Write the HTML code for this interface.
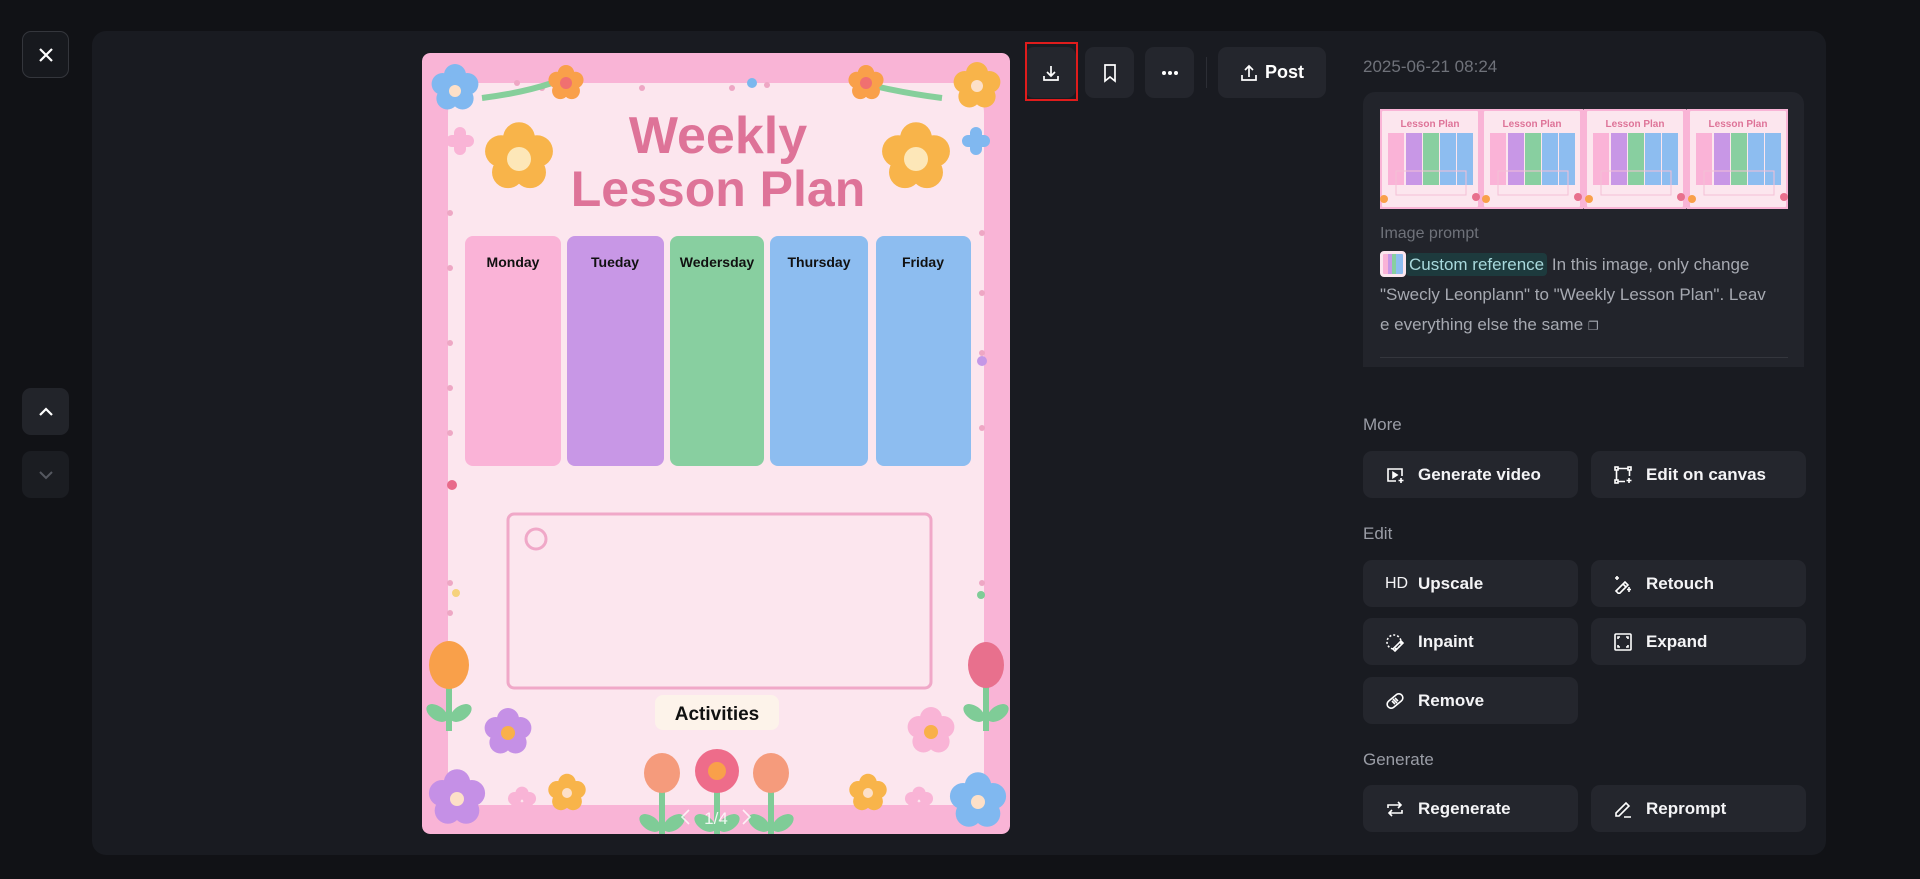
<!DOCTYPE html>
<html><head><meta charset="utf-8"><style>
*{box-sizing:border-box;margin:0;padding:0}
body{width:1920px;height:879px;background:#111216;font-family:"Liberation Sans",sans-serif;position:relative;overflow:hidden;color:#fff}
.abs{position:absolute}
.sq{position:absolute;width:47px;height:47px;border-radius:9px;background:#1b1d23;display:flex;align-items:center;justify-content:center}
.panel{left:92px;top:31px;width:1734px;height:824px;background:#191b21;border-radius:14px}
.tb{position:absolute;top:47px;height:51px;border-radius:9px;background:#24262d;display:flex;align-items:center;justify-content:center}
.lbl{position:absolute;left:1363px;font-size:17px;color:#9a9da6}
.btn{position:absolute;width:215px;height:47px;border-radius:9px;background:#24262d;display:flex;align-items:center;font-size:17px;font-weight:bold;color:#f4f4f6}
.btn svg{position:absolute;left:22px;top:14px}
.btn span{position:absolute;left:55px}
</style></head><body>
<div class="sq" style="left:22px;top:31px;border:1px solid #34363c;background:#17191e"><svg width="18" height="18" viewBox="0 0 18 18"><path d="M3 3L15 15M15 3L3 15" stroke="#fff" stroke-width="2.2"/></svg></div>
<div class="sq" style="left:22px;top:388px;background:#22242a"><svg width="18" height="18"><path d="M3 12L9 6L15 12" stroke="#fff" stroke-width="2.2" fill="none"/></svg></div>
<div class="sq" style="left:22px;top:451px;background:#1b1d22"><svg width="18" height="18"><path d="M3 6L9 12L15 6" stroke="#555860" stroke-width="2" fill="none"/></svg></div>
<div class="abs panel"></div>

<svg class="abs" style="left:422px;top:53px;border-radius:8px" width="588" height="781" viewBox="0 0 588 781">
<defs>
<g id="fl"><circle cx="0" cy="-13" r="11"/><circle cx="12.4" cy="-4" r="11"/><circle cx="7.6" cy="10.5" r="11"/><circle cx="-7.6" cy="10.5" r="11"/><circle cx="-12.4" cy="-4" r="11"/></g>
<g id="tu"><path d="M0 20V70" stroke="#7fcc97" stroke-width="6"/><ellipse cx="-12" cy="52" rx="12" ry="7" fill="#7fcc97" transform="rotate(35 -12 52)"/><ellipse cx="12" cy="52" rx="12" ry="7" fill="#7fcc97" transform="rotate(-35 12 52)"/></g>
</defs>
<rect width="588" height="781" rx="8" fill="#f9b4d6"/>
<rect x="26" y="30" width="536" height="722" rx="30" fill="#fce6ee"/>
<g fill="#eea7c4"><circle cx="95" cy="30" r="3"/><circle cx="120" cy="35" r="3"/><circle cx="150" cy="38" r="3"/><circle cx="220" cy="35" r="3"/><circle cx="310" cy="35" r="3"/><circle cx="345" cy="32" r="3"/>
<circle cx="28" cy="160" r="3"/><circle cx="28" cy="215" r="3"/><circle cx="28" cy="290" r="3"/><circle cx="28" cy="335" r="3"/><circle cx="28" cy="380" r="3"/><circle cx="28" cy="530" r="3"/><circle cx="28" cy="560" r="3"/>
<circle cx="560" cy="180" r="3"/><circle cx="560" cy="240" r="3"/><circle cx="560" cy="300" r="3"/><circle cx="560" cy="375" r="3"/><circle cx="560" cy="530" r="3"/></g>
<circle cx="330" cy="30" r="5" fill="#7ab8ee"/><circle cx="560" cy="308" r="5" fill="#c497e6"/><circle cx="30" cy="432" r="5" fill="#e86a8a"/><circle cx="34" cy="540" r="4" fill="#f6d27d"/><circle cx="559" cy="542" r="4" fill="#7fcc97"/>
<path d="M60 45Q100 40 130 30M440 30Q480 40 520 45" stroke="#86cf9b" stroke-width="6" fill="none"/>
<use href="#fl" x="33" y="35" fill="#80b8f0"/><circle cx="33" cy="38" r="6" fill="#fde0c8"/>
<use href="#fl" x="144" y="30" fill="#f9a04a" transform="translate(144 30) scale(.75) translate(-144 -30)"/><circle cx="144" cy="30" r="6" fill="#f07070"/>
<use href="#fl" x="444" y="30" fill="#f9a04a" transform="translate(444 30) scale(.75) translate(-444 -30)"/><circle cx="444" cy="30" r="6" fill="#f07070"/>
<use href="#fl" x="555" y="33" fill="#f8b44a"/><circle cx="555" cy="33" r="6" fill="#fde0c8"/>
<use href="#fl" x="97" y="104" fill="#f8b44a" transform="translate(97 104) scale(1.45) translate(-97 -104)"/><circle cx="97" cy="106" r="12" fill="#fde7b8"/>
<use href="#fl" x="494" y="104" fill="#f8b44a" transform="translate(494 104) scale(1.45) translate(-494 -104)"/><circle cx="494" cy="106" r="12" fill="#fde7b8"/>
<path d="M30 88h16M38 80v16" stroke="#f9b4d6" stroke-width="12" stroke-linecap="round"/>
<path d="M546 88h16M554 80v16" stroke="#80b8f0" stroke-width="12" stroke-linecap="round"/>
<text x="296" y="100" text-anchor="middle" font-family="Liberation Sans" font-weight="bold" font-size="52" fill="#de7398">Weekly</text>
<text x="296" y="153" text-anchor="middle" font-family="Liberation Sans" font-weight="bold" font-size="50" fill="#de7398">Lesson Plan</text>
<rect x="43" y="183" width="96" height="230" rx="8" fill="#fab3d7"/>
<rect x="145" y="183" width="97" height="230" rx="8" fill="#c897e6"/>
<rect x="248" y="183" width="94" height="230" rx="8" fill="#88cfa0"/>
<rect x="348" y="183" width="98" height="230" rx="8" fill="#8dbdf0"/>
<rect x="454" y="183" width="95" height="230" rx="8" fill="#8dbdf0"/>
<g font-family="Liberation Sans" font-weight="bold" font-size="14" fill="#111" text-anchor="middle">
<text x="91" y="214">Monday</text><text x="193" y="214">Tueday</text><text x="295" y="214">Wedersday</text><text x="397" y="214">Thursday</text><text x="501" y="214">Friday</text></g>
<rect x="86" y="461" width="423" height="174" rx="6" fill="none" stroke="#f0a8c8" stroke-width="3"/>
<circle cx="114" cy="486" r="10" fill="none" stroke="#f0a8c8" stroke-width="3"/>
<rect x="233" y="642" width="124" height="35" rx="8" fill="#fdf3ea"/>
<text x="295" y="667" text-anchor="middle" font-family="Liberation Sans" font-weight="bold" font-size="19" fill="#111">Activities</text>
<use href="#tu" x="27" y="608"/><ellipse cx="27" cy="612" rx="20" ry="24" fill="#f9a04a"/>
<use href="#tu" x="564" y="608"/><ellipse cx="564" cy="612" rx="18" ry="23" fill="#e8708d"/>
<use href="#tu" x="240" y="718"/><ellipse cx="240" cy="720" rx="18" ry="20" fill="#f59b7c"/>
<use href="#tu" x="295" y="718"/><ellipse cx="295" cy="718" rx="22" ry="22" fill="#ee6c8a"/><circle cx="295" cy="718" r="9" fill="#f9a04a"/>
<use href="#tu" x="349" y="718"/><ellipse cx="349" cy="720" rx="18" ry="20" fill="#f59b7c"/>
<use href="#fl" x="86" y="679" fill="#c590e6"/><circle cx="86" cy="680" r="7" fill="#f9b04a"/>
<use href="#fl" x="509" y="678" fill="#f9b4d6"/><circle cx="509" cy="679" r="7" fill="#f9b04a"/>
<use href="#fl" x="35" y="745" fill="#c590e6" transform="translate(35 745) scale(1.2) translate(-35 -745)"/><circle cx="35" cy="746" r="7" fill="#fde0c8"/>
<use href="#fl" x="556" y="748" fill="#80b8f0" transform="translate(556 748) scale(1.2) translate(-556 -748)"/><circle cx="556" cy="749" r="7" fill="#fde0c8"/>
<use href="#fl" x="145" y="740" fill="#f8b44a" transform="translate(145 740) scale(.8) translate(-145 -740)"/><circle cx="145" cy="740" r="5" fill="#fde0c8"/>
<use href="#fl" x="446" y="740" fill="#f8b44a" transform="translate(446 740) scale(.8) translate(-446 -740)"/><circle cx="446" cy="740" r="5" fill="#fde0c8"/>
<use href="#fl" x="100" y="748" fill="#f9b4d6" transform="translate(100 748) scale(.6) translate(-100 -748)"/>
<use href="#fl" x="497" y="748" fill="#f9b4d6" transform="translate(497 748) scale(.6) translate(-497 -748)"/>
<text x="294" y="771" text-anchor="middle" font-family="Liberation Sans" font-size="17" fill="#fff" fill-opacity=".85">1/4</text>
<path d="M267 757l-7 7 7 7M321 757l7 7-7 7" stroke="#fff" stroke-opacity=".8" stroke-width="1.6" fill="none"/>
</svg>

<div class="tb" style="left:1025px;width:51px;background:#24262d"><svg width="20" height="20" viewBox="0 0 20 20" fill="none" stroke="#fff" stroke-width="1.7"><path d="M10 3v10M6 9l4 4 4-4M3 13v4h14v-4"/></svg></div>
<div class="abs" style="left:1025px;top:42px;width:53px;height:59px;border:2px solid #e01c1c"></div>
<div class="tb" style="left:1085px;width:49px"><svg width="18" height="20" viewBox="0 0 18 20" fill="none" stroke="#fff" stroke-width="1.7"><path d="M4 2h10v16l-5-4-5 4z"/></svg></div>
<div class="tb" style="left:1145px;width:49px"><svg width="20" height="6"><circle cx="4" cy="3" r="2" fill="#fff"/><circle cx="10" cy="3" r="2" fill="#fff"/><circle cx="16" cy="3" r="2" fill="#fff"/></svg></div>
<div class="abs" style="left:1206px;top:57px;width:1px;height:31px;background:#2c2e35"></div>
<div class="tb" style="left:1218px;width:108px;font-size:18px;font-weight:bold;color:#fff"><svg width="18" height="20" viewBox="0 0 18 20" fill="none" stroke="#fff" stroke-width="1.7" style="margin-right:7px"><path d="M9 14V3M5 7l4-4 4 4M2 12v5h14v-5"/></svg>Post</div>

<div class="abs" style="left:1363px;top:57px;font-size:17px;color:#6f727a">2025-06-21 08:24</div>
<div class="abs" style="left:1363px;top:92px;width:441px;height:275px;background:#22242b;border-radius:12px 12px 0 0"></div>
<svg class="abs" style="left:1380px;top:109px" width="408" height="100">
<g id="th"><rect width="100" height="100" rx="3" fill="#fce6ee"/><rect x="0" y="0" width="100" height="100" rx="3" fill="none" stroke="#f9b4d6" stroke-width="4"/><text x="50" y="18" text-anchor="middle" font-family="Liberation Sans" font-size="10" fill="#de7398" font-weight="bold">Lesson Plan</text><rect x="8" y="24" width="16" height="52" fill="#fab3d7"/><rect x="26" y="24" width="16" height="52" fill="#c897e6"/><rect x="43" y="24" width="16" height="52" fill="#88cfa0"/><rect x="60" y="24" width="16" height="52" fill="#8dbdf0"/><rect x="77" y="24" width="16" height="52" fill="#8dbdf0"/><rect x="16" y="62" width="70" height="24" fill="none" stroke="#f3c0d6"/><circle cx="4" cy="90" r="4" fill="#f9a04a"/><circle cx="96" cy="88" r="4" fill="#e8708d"/></g>
<use href="#th" x="102"/><use href="#th" x="205"/><use href="#th" x="308"/>
</svg>
<div class="abs" style="left:1380px;top:225px;font-size:16px;color:#6f727a">Image prompt</div>
<div class="abs" style="left:1380px;top:250px;width:430px;font-size:17px;line-height:30px;color:#a6a9b1;white-space:nowrap">
<span style="display:inline-block;width:26px;height:26px;vertical-align:-7px;border-radius:4px;background:linear-gradient(90deg,#fab3d7 25%,#c897e6 25% 45%,#88cfa0 45% 65%,#8dbdf0 65%);border:3px solid #fce6ee"></span><span style="background:#1d3a3d;color:#a8d8dc;border-radius:4px;padding:2px 3px">Custom reference</span> In this image, only change<br>"Swecly Leonplann" to "Weekly Lesson Plan". Leav<br>e everything else the same <span style="font-size:12px">&#10064;</span></div>
<div class="abs" style="left:1380px;top:357px;width:408px;height:1px;background:#34363d"></div>

<div class="lbl" style="top:415px">More</div>
<div class="btn" style="left:1363px;top:451px"><svg width="20" height="20" viewBox="0 0 20 20" fill="none" stroke="#fff" stroke-width="1.6"><path d="M11 16H3V4h14v7"/><path d="M8 7.5v5l4-2.5z" fill="#fff"/><path d="M16 13v5M13.5 15.5h5"/></svg><span>Generate video</span></div>
<div class="btn" style="left:1591px;top:451px"><svg width="20" height="20" viewBox="0 0 20 20" fill="none" stroke="#fff" stroke-width="1.6"><rect x="2" y="2" width="3" height="3"/><rect x="15" y="2" width="3" height="3"/><rect x="2" y="15" width="3" height="3"/><path d="M5 3.5h10M3.5 5v10M5 16.5h7M16.5 5v6M16 13v5M13.5 15.5h5"/></svg><span>Edit on canvas</span></div>
<div class="lbl" style="top:524px">Edit</div>
<div class="btn" style="left:1363px;top:560px"><svg width="1" height="1"></svg><b style="position:absolute;left:22px;font-weight:normal;font-size:16px">HD</b><span>Upscale</span></div>
<div class="btn" style="left:1591px;top:560px"><svg width="20" height="20" viewBox="0 0 20 20" fill="none" stroke="#fff" stroke-width="1.6"><path d="M3 17l9-9 3 3-9 9zM10 10l3 3M4 2v4M2 4h4M16 13v5M14 15.5h4"/></svg><span>Retouch</span></div>
<div class="btn" style="left:1363px;top:618px"><svg width="20" height="20" viewBox="0 0 20 20" fill="none" stroke="#fff" stroke-width="1.6"><circle cx="9" cy="10" r="7" stroke-dasharray="2 2"/><path d="M8 17l8-8 2 2-8 8z"/></svg><span>Inpaint</span></div>
<div class="btn" style="left:1591px;top:618px"><svg width="20" height="20" viewBox="0 0 20 20" fill="none" stroke="#fff" stroke-width="1.6"><rect x="2" y="2" width="16" height="16" rx="1"/><path d="M5 7V5h2M13 5h2v2M15 13v2h-2M7 15H5v-2"/></svg><span>Expand</span></div>
<div class="btn" style="left:1363px;top:677px"><svg width="20" height="20" viewBox="0 0 20 20" fill="none" stroke="#fff" stroke-width="1.6"><rect x="1" y="6" width="18" height="8" rx="4" transform="rotate(-40 10 10)"/><path d="M8 8l4 4M10 7l3 3M7 10l3 3"/></svg><span>Remove</span></div>
<div class="lbl" style="top:750px">Generate</div>
<div class="btn" style="left:1363px;top:785px"><svg width="20" height="20" viewBox="0 0 20 20" fill="none" stroke="#fff" stroke-width="1.6"><path d="M3 9V6h13M13 3l3 3-3 3M17 11v3H4M7 17l-3-3 3-3"/></svg><span>Regenerate</span></div>
<div class="btn" style="left:1591px;top:785px"><svg width="20" height="20" viewBox="0 0 20 20" fill="none" stroke="#fff" stroke-width="1.6"><path d="M3 17v-3L13 4l3 3L6 17zM11 18h7"/></svg><span>Reprompt</span></div>
</body></html>
